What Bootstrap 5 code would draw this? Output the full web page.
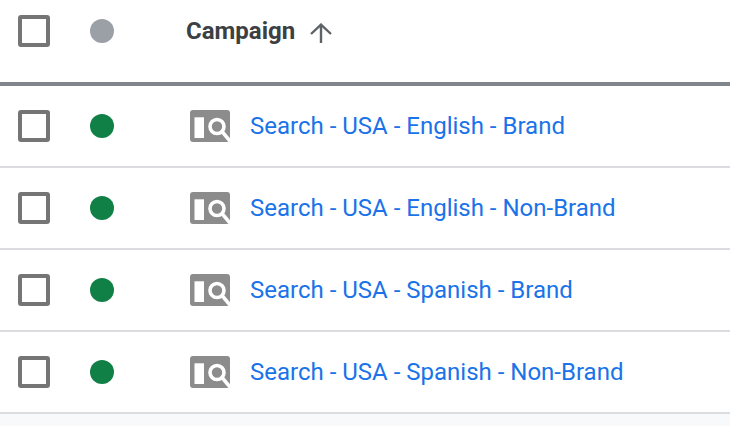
<!DOCTYPE html>
<html lang="en">
<head>
<meta charset="utf-8">
<title>Campaigns</title>
<link rel="stylesheet" href="https://cdn.jsdelivr.net/npm/bootstrap@5.3.0/dist/css/bootstrap.min.css">
<style>
html, body { height: 100%; }
body { background: #f8f9fa; font-family: Roboto, "Liberation Sans", sans-serif; overflow: hidden; }
.grid-wrap { background: #fff; }
.grid-row { height: 82px; border-bottom: 2px solid #dadce0; }
.grid-head { height: 86px; border-bottom: 4px solid #80868b; padding-bottom: 20px; }
.cell-check { width: 90px; padding-left: 18px; flex: none; }
.cell-dot { width: 96px; flex: none; }
.box { display: block; width: 32px; height: 32px; border: 4px solid #757575; border-radius: 3px; background: #fff; }
.dot { display: block; width: 24px; height: 24px; border-radius: 50%; background: #118046; }
.dot-off { background: #9aa0a6; }
.head-label { font-size: 24px; font-weight: 700; color: #3c4043; line-height: 1; }
.sort-arrow { margin-left: 15px; margin-top: 4px; }
.type-icon { margin-left: 4px; margin-right: 20px; flex: none; }
.camp-link { color: #1a73e8; font-size: 24px; text-decoration: none; line-height: 1; white-space: nowrap; }
</style>
</head>
<body>
<div class="grid-wrap">
  <div class="grid-row grid-head d-flex align-items-center">
    <div class="cell-check"><span class="box"></span></div>
    <div class="cell-dot"><span class="dot dot-off"></span></div>
    <div class="d-flex align-items-center">
      <span class="head-label">Campaign</span>
      <svg class="sort-arrow" width="22" height="20" viewBox="0 0 22 20" fill="none" stroke="#5f6368" stroke-width="2.4"><path d="M11 20V2M1 11 11 1.600 21 11"/></svg>
    </div>
  </div>
  <div class="grid-row d-flex align-items-center">
    <div class="cell-check"><span class="box"></span></div>
    <div class="cell-dot"><span class="dot"></span></div>
    <div class="d-flex align-items-center">
      <svg class="type-icon" width="40" height="32" viewBox="0 0 40 32"><rect width="40" height="32" rx="3" fill="#8c8c8c"/><rect x="4.500" y="7.300" width="9.500" height="20.700" fill="#fff"/><circle cx="27" cy="16.500" r="7" fill="#8c8c8c" stroke="#fff" stroke-width="3.600"/><path d="M32 21.500 40 31" stroke="#fff" stroke-width="3.600"/></svg>
      <a class="camp-link" href="#">Search - USA - English - Brand</a>
    </div>
  </div>
  <div class="grid-row d-flex align-items-center">
    <div class="cell-check"><span class="box"></span></div>
    <div class="cell-dot"><span class="dot"></span></div>
    <div class="d-flex align-items-center">
      <svg class="type-icon" width="40" height="32" viewBox="0 0 40 32"><rect width="40" height="32" rx="3" fill="#8c8c8c"/><rect x="4.500" y="7.300" width="9.500" height="20.700" fill="#fff"/><circle cx="27" cy="16.500" r="7" fill="#8c8c8c" stroke="#fff" stroke-width="3.600"/><path d="M32 21.500 40 31" stroke="#fff" stroke-width="3.600"/></svg>
      <a class="camp-link" href="#">Search - USA - English - Non-Brand</a>
    </div>
  </div>
  <div class="grid-row d-flex align-items-center">
    <div class="cell-check"><span class="box"></span></div>
    <div class="cell-dot"><span class="dot"></span></div>
    <div class="d-flex align-items-center">
      <svg class="type-icon" width="40" height="32" viewBox="0 0 40 32"><rect width="40" height="32" rx="3" fill="#8c8c8c"/><rect x="4.500" y="7.300" width="9.500" height="20.700" fill="#fff"/><circle cx="27" cy="16.500" r="7" fill="#8c8c8c" stroke="#fff" stroke-width="3.600"/><path d="M32 21.500 40 31" stroke="#fff" stroke-width="3.600"/></svg>
      <a class="camp-link" href="#">Search - USA - Spanish - Brand</a>
    </div>
  </div>
  <div class="grid-row d-flex align-items-center">
    <div class="cell-check"><span class="box"></span></div>
    <div class="cell-dot"><span class="dot"></span></div>
    <div class="d-flex align-items-center">
      <svg class="type-icon" width="40" height="32" viewBox="0 0 40 32"><rect width="40" height="32" rx="3" fill="#8c8c8c"/><rect x="4.500" y="7.300" width="9.500" height="20.700" fill="#fff"/><circle cx="27" cy="16.500" r="7" fill="#8c8c8c" stroke="#fff" stroke-width="3.600"/><path d="M32 21.500 40 31" stroke="#fff" stroke-width="3.600"/></svg>
      <a class="camp-link" href="#">Search - USA - Spanish - Non-Brand</a>
    </div>
  </div>
</div>
<script src="https://cdn.jsdelivr.net/npm/bootstrap@5.3.0/dist/js/bootstrap.bundle.min.js"></script>
</body>
</html>
